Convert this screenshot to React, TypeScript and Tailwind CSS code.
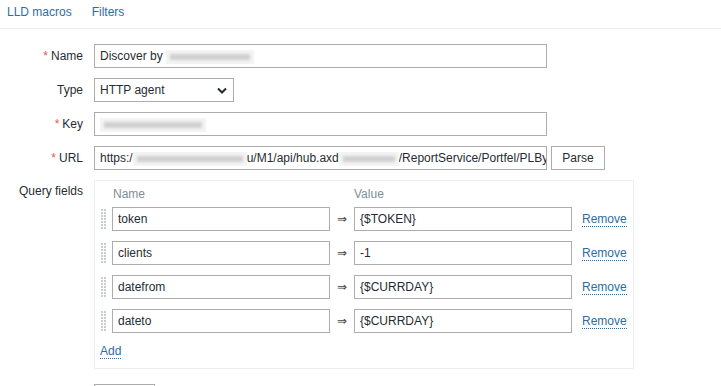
import React from "react";

const Blur = ({ w }: { w: number }) => (
  <span
    className="inline-block h-[14px] align-middle bg-[#f4f4f4] relative"
    style={{ width: w }}
  >
    <span className="absolute inset-x-[4px] top-[4px] h-[6px] bg-[#cfcfcf] blur-[1.5px]" />
  </span>
);

const Label = ({ text, req }: { text: string; req?: boolean }) => (
  <div className="w-[94px] pr-[11px] text-right text-[12px] text-[#1f2c33] leading-[24px] shrink-0">
    {req && <span className="text-[#e45959] mr-[3px]">*</span>}
    {text}
  </div>
);

const Input = ({ children, w }: { children?: React.ReactNode; w: string }) => (
  <div
    className={`${w} shrink-0 h-[24px] border border-[#acacac] bg-white px-[5px] text-[12px] leading-[22px] text-[#1f2c33] whitespace-nowrap overflow-hidden`}
  >
    {children}
  </div>
);

const Handle = () => (
  <svg width="17" height="24" viewBox="0 0 17 24" className="shrink-0">
    {[0, 1, 2, 3, 4, 5, 6].map((r) => (
      <g key={r} fill="#c8cdd0">
        <rect x="6" y={2 + r * 3} width="2" height="2" />
        <rect x="9" y={2 + r * 3} width="2" height="2" />
      </g>
    ))}
  </svg>
);

const Row = ({ name, value }: { name: string; value: string }) => (
  <div className="flex items-center h-[24px]">
    <Handle />
    <Input w="w-[218px]">{name}</Input>
    <div className="w-[24px] text-center text-[12px] text-[#444]">⇒</div>
    <Input w="w-[218px]">{value}</Input>
    <div className="ml-[10px] text-[12px] text-[#2c6ea3] border-b border-dotted border-[#2c6ea3] leading-[14px] mt-[1px]">
      Remove
    </div>
  </div>
);

export default function App() {
  return (
    <div className="w-[721px] h-[386px] overflow-hidden bg-white font-['Liberation_Sans',Arial,sans-serif]">
      <div className="h-[29px] border-b border-[#ebeef0] flex items-center gap-[20px] px-[7px] text-[12px] text-[#2c6ea3] pb-[4px]">
        <span>LLD macros</span>
        <span>Filters</span>
      </div>
      <div className="pt-[15px] flex flex-col gap-[10px]">
        <div className="flex">
          <Label text="Name" req />
          <Input w="w-[453px]">
            Discover by <Blur w={88} />
          </Input>
        </div>
        <div className="flex">
          <Label text="Type" />
          <div className="w-[140px] h-[24px] border border-[#acacac] bg-white px-[5px] text-[12px] leading-[22px] text-[#1f2c33] flex items-center justify-between">
            <span>HTTP agent</span>
            <svg width="10" height="7" viewBox="0 0 10 7" className="mr-[1px]">
              <path d="M1 1.5 L5 5.5 L9 1.5" stroke="#1f2c33" strokeWidth="2" fill="none" />
            </svg>
          </div>
        </div>
        <div className="flex">
          <Label text="Key" req />
          <Input w="w-[453px]">
            <Blur w={106} />
          </Input>
        </div>
        <div className="flex">
          <Label text="URL" req />
          <Input w="w-[453px]">
            https:/<Blur w={114} />u/M1/api/hub.axd<Blur w={60} />/ReportService/Portfel/PLBy
          </Input>
          <div className="ml-[4px] w-[54px] h-[24px] border border-[#acacac] bg-white text-[12px] leading-[22px] text-center text-[#1f2c33]">
            Parse
          </div>
        </div>
        <div className="flex">
          <div className="w-[94px] pr-[11px] text-right text-[12px] text-[#1f2c33] leading-[20px] pt-[1px] shrink-0">
            Query fields
          </div>
          <div className="w-[540px] border border-[#ebeef0] pt-[4px] pb-[9px]">
            <div className="flex text-[12px] text-[#7e8f99] h-[18px] leading-[18px] mb-[4px]">
              <span className="ml-[17px] pl-[1px] w-[242px]">Name</span>
              <span>Value</span>
            </div>
            <div className="flex flex-col gap-[10px]">
              <Row name="token" value="{$TOKEN}" />
              <Row name="clients" value="-1" />
              <Row name="datefrom" value="{$CURRDAY}" />
              <Row name="dateto" value="{$CURRDAY}" />
            </div>
            <div className="mt-[11px] ml-[5px] h-[15px] flex items-start leading-[14px]">
              <span className="text-[12px] text-[#2c6ea3] border-b border-dotted border-[#2c6ea3] leading-[14px]">
                Add
              </span>
            </div>
          </div>
        </div>
        <div className="flex mt-[5px]">
          <div className="w-[94px] shrink-0" />
          <div className="w-[61px] h-[24px] border border-[#acacac] bg-white" />
        </div>
      </div>
    </div>
  );
}
